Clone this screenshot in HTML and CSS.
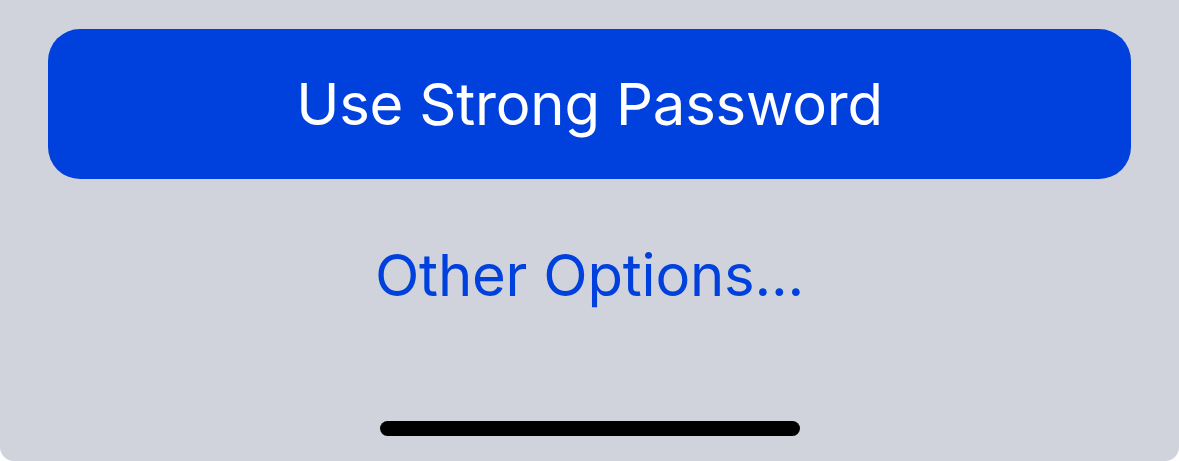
FILE: index.html
```html
<!DOCTYPE html>
<html lang="en">
<head>
    <meta charset="UTF-8">
    <meta name="viewport" content="width=device-width, initial-scale=1.0">
    <title>Password Suggestion</title>
    <link rel="stylesheet" href="styles.css">
</head>
<body>
    <div class="sheet">
        <button class="primary-button">Use Strong Password</button>
        <button class="link-button">Other Options...</button>
        <div class="home-indicator"></div>
    </div>
</body>
</html>
```

FILE: styles.css
```css
html, body {
    margin: 0;
    padding: 0;
    background-color: #ffffff;
}
body {
    font-family: 'Inter', 'Roboto', sans-serif;
}
.sheet {
    width: 1179px;
    height: 461px;
    box-sizing: border-box;
    background-color: #d0d3dc;
    border-radius: 0 0 14px 14px;
    padding: 29px 48px 0 48px;
    display: flex;
    flex-direction: column;
    align-items: center;
}
.primary-button {
    width: 100%;
    height: 150px;
    border: none;
    border-radius: 32px;
    background-color: #0040dd;
    color: #ffffff;
    font-family: inherit;
    font-size: 58px;
    font-weight: 400;
    letter-spacing: -0.2px;
    padding: 0;
    cursor: pointer;
}
.link-button {
    margin-top: 60px;
    height: 72px;
    border: none;
    background: none;
    color: #0040dd;
    font-family: inherit;
    font-size: 58px;
    font-weight: 400;
    letter-spacing: -0.2px;
    padding: 0;
    cursor: pointer;
}
.home-indicator {
    margin-top: 110px;
    width: 420px;
    height: 15px;
    border-radius: 8px;
    background-color: #000000;
}
```
